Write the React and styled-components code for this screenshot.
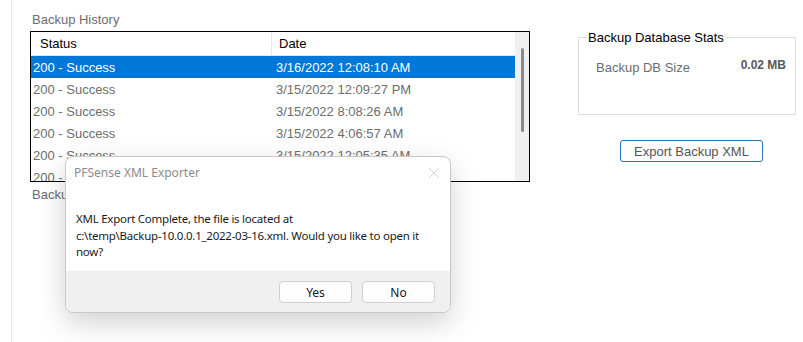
import React from 'react';
import styled, { createGlobalStyle } from 'styled-components';

const GlobalStyle = createGlobalStyle`
  html, body {
    margin: 0;
    padding: 0;
    background: #ffffff;
  }
  body {
    font-family: "Liberation Sans", Arial, sans-serif;
  }
`;

const Screen = styled.div`
  position: relative;
  width: 803px;
  height: 342px;
  overflow: hidden;
  background: #ffffff;
`;

const Frame = styled.div`
  display: flex;
  margin-left: 11px;
  height: 100%;
  border-left: 1px solid #e4e4e4;
`;

const LeftColumn = styled.div`
  display: flex;
  flex-direction: column;
  padding: 12px 0 0 18px;
  width: 500px;
`;

const SectionLabel = styled.div`
  font-size: 13px;
  line-height: 16px;
  color: #6d6d6d;
  padding-left: 2px;
`;

const ListBox = styled.div`
  display: flex;
  width: 498px;
  height: 149px;
  border: 1px solid #000000;
  margin-top: 3px;
  margin-bottom: 5px;
  overflow: hidden;
`;

const ListBody = styled.div`
  flex: 1;
  display: flex;
  flex-direction: column;
`;

const HeaderRow = styled.div`
  display: grid;
  grid-template-columns: 241px 1fr;
  height: 23px;
  border-bottom: 1px solid #e5e5e5;
  flex-shrink: 0;
`;

const HeaderCell = styled.div`
  display: flex;
  align-items: center;
  padding-left: ${({ pad }) => pad}px;
  font-size: 13px;
  color: #000000;
  border-right: ${({ last }) => (last ? 'none' : '1px solid #e5e5e5')};
`;

const Row = styled.div`
  display: grid;
  grid-template-columns: 241px 1fr;
  height: 22px;
  flex-shrink: 0;
  background: ${({ selected }) => (selected ? '#0078d7' : 'transparent')};
  color: ${({ selected }) => (selected ? '#ffffff' : '#6d6d6d')};
`;

const Cell = styled.div`
  display: flex;
  align-items: center;
  padding-left: ${({ pad }) => pad}px;
  font-size: 13px;
  white-space: nowrap;
`;

const ScrollTrack = styled.div`
  width: 14px;
  flex-shrink: 0;
  background: #f0f0f0;
  display: flex;
  justify-content: center;
  padding-top: 16px;
`;

const ScrollThumb = styled.div`
  width: 3px;
  height: 84px;
  border-radius: 2px;
  background: #8a8a8a;
`;

const RightColumn = styled.div`
  display: flex;
  flex-direction: column;
  align-items: flex-start;
  padding: 30px 0 0 48px;
`;

const GroupBox = styled.fieldset`
  margin: 0;
  width: 218px;
  height: 85px;
  box-sizing: border-box;
  border: 1px solid #dcdcdc;
  padding: 13px 9px 0 8px;
  display: flex;
  justify-content: space-between;
  align-items: flex-start;
`;

const Legend = styled.legend`
  font-size: 13px;
  color: #000000;
  padding: 0 2px 0 1px;
  margin-left: 0;
`;

const StatLabel = styled.span`
  font-size: 13px;
  color: #6d6d6d;
  margin: 2px 0 0 9px;
`;

const StatValue = styled.span`
  font-size: 12px;
  font-weight: bold;
  color: #595959;
`;

const ExportButton = styled.button`
  margin: 25px 0 0 42px;
  width: 143px;
  height: 22px;
  border: 1px solid #2a73b5;
  border-radius: 3px;
  background: #fdfdfd;
  color: #555555;
  font-family: "Liberation Sans", Arial, sans-serif;
  font-size: 13px;
  padding: 0;
`;

const Dialog = styled.div`
  position: absolute;
  left: 65px;
  top: 156px;
  width: 386px;
  height: 157px;
  box-sizing: border-box;
  border: 1px solid #c9c9c9;
  border-radius: 8px;
  background: #ffffff;
  box-shadow: 0 10px 28px rgba(0, 0, 0, 0.18);
  display: flex;
  flex-direction: column;
  overflow: hidden;
  font-family: "Noto Sans", "Open Sans", sans-serif;
`;

const TitleBar = styled.div`
  display: flex;
  justify-content: space-between;
  align-items: center;
  height: 31px;
  padding: 0 10px 0 8px;
`;

const Title = styled.span`
  font-size: 12px;
  color: #8c8c8c;
`;

const CloseIcon = styled.svg`
  width: 12px;
  height: 12px;
`;

const Message = styled.div`
  flex: 1;
  padding: 23px 10px 0 10px;
  font-size: 11.5px;
  line-height: 16.5px;
  color: #1a1a1a;
  letter-spacing: -0.25px;
  white-space: nowrap;
`;

const Footer = styled.div`
  display: flex;
  justify-content: flex-end;
  gap: 10px;
  height: 41px;
  box-sizing: border-box;
  padding: 10px 15px 0 0;
  background: #f0f0f0;
`;

const DialogButton = styled.button`
  width: 73px;
  height: 22px;
  border: 1px solid #d0d0d0;
  border-radius: 4px;
  background: #fdfdfd;
  color: #1a1a1a;
  font-family: "Noto Sans", "Open Sans", sans-serif;
  font-size: 12px;
  padding: 0;
`;

const rows = [
  ['200 - Success', '3/16/2022 12:08:10 AM'],
  ['200 - Success', '3/15/2022 12:09:27 PM'],
  ['200 - Success', '3/15/2022 8:08:26 AM'],
  ['200 - Success', '3/15/2022 4:06:57 AM'],
  ['200 - Success', '3/15/2022 12:05:35 AM'],
  ['200 - Success', '3/14/2022 12:04:12 PM'],
];

const App = () => (
  <Screen>
    <GlobalStyle />
    <Frame>
      <LeftColumn>
        <SectionLabel>Backup History</SectionLabel>
        <ListBox>
          <ListBody>
            <HeaderRow>
              <HeaderCell pad={9}>Status</HeaderCell>
              <HeaderCell pad={7} last>Date</HeaderCell>
            </HeaderRow>
            {rows.map(([status, date], i) => (
              <Row key={i} selected={i === 0}>
                <Cell pad={2}>{status}</Cell>
                <Cell pad={4}>{date}</Cell>
              </Row>
            ))}
          </ListBody>
          <ScrollTrack>
            <ScrollThumb />
          </ScrollTrack>
        </ListBox>
        <SectionLabel>Backup Log</SectionLabel>
      </LeftColumn>
      <RightColumn>
        <GroupBox>
          <Legend>Backup Database Stats</Legend>
          <StatLabel>Backup DB Size</StatLabel>
          <StatValue>0.02 MB</StatValue>
        </GroupBox>
        <ExportButton>Export Backup XML</ExportButton>
      </RightColumn>
    </Frame>
    <Dialog>
      <TitleBar>
        <Title>PFSense XML Exporter</Title>
        <CloseIcon viewBox="0 0 12 12">
          <path d="M1 1 L11 11 M11 1 L1 11" stroke="#d4d4d4" strokeWidth="1" />
        </CloseIcon>
      </TitleBar>
      <Message>
        XML Export Complete, the file is located at
        <br />
        c:\temp\Backup-10.0.0.1_2022-03-16.xml. Would you like to open it
        <br />
        now?
      </Message>
      <Footer>
        <DialogButton>Yes</DialogButton>
        <DialogButton>No</DialogButton>
      </Footer>
    </Dialog>
  </Screen>
);

export default App;
